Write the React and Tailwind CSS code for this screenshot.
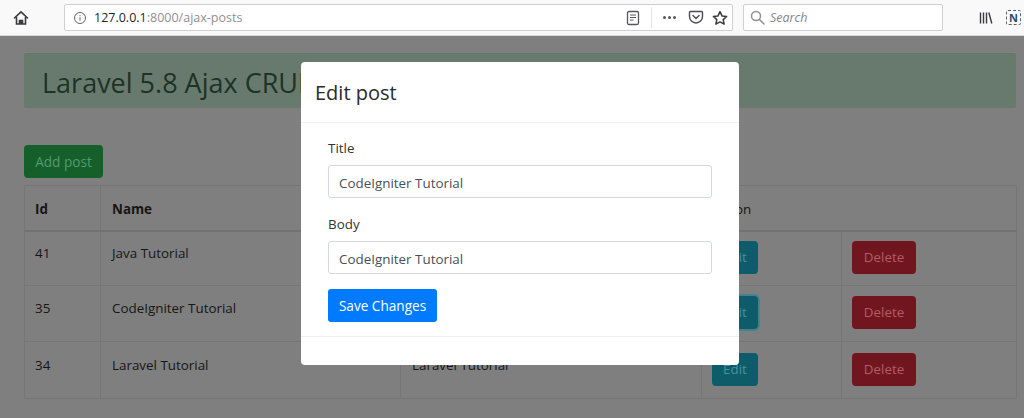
import React from "react"

function HomeIcon() {
  return (
    <svg width="16" height="16" viewBox="0 0 16 16" fill="none" stroke="#3a3a3f" strokeWidth="1.6">
      <path d="M1.500 8 8 1.800 14.500 8" strokeLinecap="round" strokeLinejoin="round" />
      <path d="M3.500 7v7h9V7" />
      <path d="M6.500 14v-3.500h3V14" fill="#3a3a3f" />
    </svg>
  )
}

function InfoIcon() {
  return (
    <svg width="14" height="14" viewBox="0 0 14 14" fill="none" stroke="#66666b" strokeWidth="1">
      <circle cx="7" cy="7" r="5.500" />
      <path d="M7 6.200v3.600M7 4v1.200" />
    </svg>
  )
}

function ReaderIcon() {
  return (
    <svg width="14" height="16" viewBox="0 0 14 16" fill="none" stroke="#55555a" strokeWidth="1.300">
      <rect x="1.500" y="1.500" width="11" height="13" rx="1.500" />
      <path d="M4 5h6M4 7.500h6M4 10h3.500" strokeWidth="1" />
    </svg>
  )
}

function PocketIcon() {
  return (
    <svg width="16" height="15" viewBox="0 0 16 15" fill="none" stroke="#4a4a4f" strokeWidth="1.400">
      <path d="M2.500 1.500h11a1 1 0 0 1 1 1v4a6.500 6.500 0 0 1-13 0v-4a1 1 0 0 1 1-1z" />
      <path d="M5 5.500 8 8.500l3-3" strokeLinecap="round" strokeLinejoin="round" />
    </svg>
  )
}

function StarIcon() {
  return (
    <svg width="16" height="16" viewBox="0 0 16 16" fill="none" stroke="#3a3a3f" strokeWidth="1.500" strokeLinejoin="round">
      <path d="M8 1.600 10 5.900l4.600.6-3.400 3.100.9 4.600L8 11.900l-4.100 2.300.9-4.600L1.400 6.500 6 5.900z" />
    </svg>
  )
}

function SearchIcon() {
  return (
    <svg width="15" height="15" viewBox="0 0 15 15" fill="none" stroke="#8f8f94" strokeWidth="1.500">
      <circle cx="6" cy="6" r="4.500" />
      <path d="m9.500 9.500 4.500 4.500" strokeLinecap="round" />
    </svg>
  )
}

function LibraryIcon() {
  return (
    <svg width="14" height="14" viewBox="0 0 14 14" fill="none" stroke="#3a3a3f" strokeWidth="1.400">
      <path d="M1.500 1.500v11M4.500 1.500v11M7.500 1.500v11M9.800 1.500l3 11" />
    </svg>
  )
}

function NIcon() {
  return (
    <div className="flex h-[15px] w-[15px] items-center justify-center rounded-[2px] border border-dashed border-[#55606e]">
      <span className="text-[11px] leading-none font-bold text-[#2b4a73]">N</span>
    </div>
  )
}

function Toolbar() {
  return (
    <div className="flex h-[36px] items-center border-b border-[#d6d6d6] bg-[#f9f9fa]">
      <div className="ml-[13px] w-[51px]">
        <HomeIcon />
      </div>
      <div className="flex h-[27px] w-[669px] items-center rounded-[2px] border border-[#cfcfd1] bg-white pl-[8px]">
        <InfoIcon />
        <span className="ml-[7px] mt-[2px] text-[12.5px] text-[#1f1f22]">127.0.0.1<span className="text-[#8f8f94]">:8000/ajax-posts</span></span>
        <div className="ml-auto flex items-center">
          <ReaderIcon />
          <div className="ml-[11px] h-[21px] w-px bg-[#e4e4e6]" />
          <div className="ml-[11px] flex w-[14px] gap-[2px]">
            <span className="h-[3px] w-[3px] rounded-full bg-[#55555a]" />
            <span className="h-[3px] w-[3px] rounded-full bg-[#55555a]" />
            <span className="h-[3px] w-[3px] rounded-full bg-[#55555a]" />
          </div>
          <div className="ml-[11px]"><PocketIcon /></div>
          <div className="ml-[8px] mr-[4px]"><StarIcon /></div>
        </div>
      </div>
      <div className="ml-[10px] flex h-[27px] w-[200px] items-center rounded-[2px] border border-[#cfcfd1] bg-white pl-[6px]">
        <SearchIcon />
        <span className="ml-[5px] mt-[2px] text-[12.5px] italic text-[#85858a]">Search</span>
      </div>
      <div className="ml-[36px]"><LibraryIcon /></div>
      <div className="ml-[13px]"><NIcon /></div>
    </div>
  )
}

const rows = [
  { id: 41, name: "Java Tutorial", height: "h-[55px]", focus: false },
  { id: 35, name: "CodeIgniter Tutorial", height: "h-[56px]", focus: true },
  { id: 34, name: "Laravel Tutorial", height: "h-[57px]", focus: false },
]

function PostsTable() {
  return (
    <table className="mt-[7px] w-[992px] table-fixed border-collapse text-[13.4px] text-[#161616]">
      <colgroup>
        <col className="w-[76px]" />
        <col className="w-[300px]" />
        <col className="w-[301px]" />
        <col className="w-[140px]" />
        <col className="w-[175px]" />
      </colgroup>
      <thead>
        <tr className="h-[45px] border-b-2 border-[#727272]">
          <th className="border border-[#767676] px-[10px] pt-[2px] text-left font-bold">Id</th>
          <th className="border border-[#767676] px-[11px] pt-[2px] text-left font-bold">Name</th>
          <th className="border border-[#767676] px-[11px] pt-[2px] text-left font-bold">Body</th>
          <th colSpan={2} className="border border-[#767676] px-[10px] pt-[2px] text-left font-normal">Action</th>
        </tr>
      </thead>
      <tbody>
        {rows.map((row) => (
          <tr key={row.id} className={row.height}>
            <td className="border border-[#767676] px-[10px] pb-[10px]">{row.id}</td>
            <td className="border border-[#767676] px-[11px] pb-[10px]">{row.name}</td>
            <td className="border border-[#767676] px-[11px] pb-[10px]">{row.name}</td>
            <td className="border border-[#767676] px-[10px] pb-[2px]">
              <button className={`flex h-[33px] w-[46px] items-center justify-center rounded-[4px] bg-[#0e5c6a] text-[13.4px] text-[#4a909c] ${row.focus ? "shadow-[0_0_0_2px_#46828c]" : ""}`}>Edit</button>
            </td>
            <td className="border border-[#767676] px-[10px] pb-[2px]">
              <button className="flex h-[33px] w-[64px] items-center justify-center rounded-[4px] bg-[#71161f] text-[13.4px] text-[#b05d66]">Delete</button>
            </td>
          </tr>
        ))}
      </tbody>
    </table>
  )
}

function Field({ label, value }) {
  return (
    <div className="mb-[17px]">
      <label className="mb-[7px] block text-[13.4px] leading-[19px] text-[#333333]">{label}</label>
      <input
        readOnly
        value={value}
        className="block h-[33px] w-[384px] rounded-[3px] border border-[#d5d8dc] bg-white px-[10px] pt-[2px] text-[13.4px] text-[#495057]"
      />
    </div>
  )
}

function EditModal() {
  return (
    <div className="absolute left-[301px] top-[62px] h-[303px] w-[438px] rounded-[4px] bg-white">
      <div className="flex h-[61px] items-center border-b border-[#eef0f2] px-[14px]">
        <h5 className="pt-[2px] text-[20px] text-[#2a2a2a]">Edit post</h5>
      </div>
      <div className="h-[214px] border-b border-[#eef0f2] pl-[27px] pt-[16px]">
        <Field label="Title" value="CodeIgniter Tutorial" />
        <Field label="Body" value="CodeIgniter Tutorial" />
        <button className="-mt-[2px] h-[33px] w-[109px] rounded-[3px] bg-[#007bff] pt-[2px] text-[13.6px] text-white">Save Changes</button>
      </div>
    </div>
  )
}

export default function App() {
  return (
    <div className="relative h-[418px] w-[1024px] overflow-hidden bg-[#7f7f7f] font-['Open_Sans',sans-serif]">
      <Toolbar />
      <div className="pl-[24px] pr-[8px] pt-[17px]">
        <div className="flex h-[55px] items-center rounded-[2px] border-t border-[#63766a] bg-[#687a6e] pl-[18px] pt-[4px] text-[27px] text-[#1d3326]">
          Laravel 5.8 Ajax CRUD
        </div>
        <button className="mt-[37px] flex h-[33px] w-[79px] items-center justify-center rounded-[4px] bg-[#155f2b] pt-[2px] text-[13.6px] text-[#559a6b]">
          Add post
        </button>
        <PostsTable />
      </div>
      <EditModal />
    </div>
  )
}
